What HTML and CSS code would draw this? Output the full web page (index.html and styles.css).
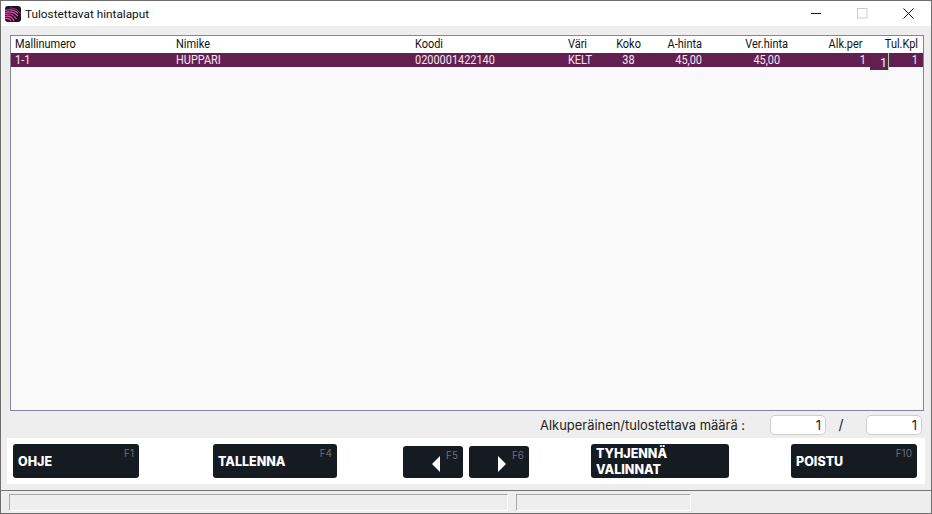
FILE: index.html
```html
<!DOCTYPE html>
<html lang="fi">
<head>
<meta charset="utf-8">
<title>Tulostettavat hintalaput</title>
<link rel="stylesheet" href="styles.css">
</head>
<body>
<div class="window">
  <header class="titlebar">
    <svg class="appicon" width="16" height="16" viewBox="0 0 16 16">
      <rect width="16" height="16" rx="3" fill="#1b1720"/>
      <path d="M0 4.5 C5 3 9 3.5 13 7M0 6.5 C5 5 9 6 13 10M0 8.5 C5 7 8 8 11.5 13M0 10.5 C4 9.5 7 10.5 9 15M0 12.5 C3 12 5 13 6 15" fill="none" stroke="#e64fb2" stroke-width="1.2"/>
      <path d="M5 2 C10 2 13 4 16 8" fill="none" stroke="#8a3f8c" stroke-width="1"/>
    </svg>
    <span class="title">Tulostettavat hintalaput</span>
    <div class="winctl">
      <span class="ctl"><svg width="11" height="11" viewBox="0 0 11 11"><path d="M0 5.5H10" stroke="#111" stroke-width="1"/></svg></span>
      <span class="ctl"><svg width="11" height="11" viewBox="0 0 11 11"><rect x=".5" y=".5" width="9.5" height="9.5" fill="none" stroke="#ccc"/></svg></span>
      <span class="ctl"><svg width="11" height="11" viewBox="0 0 11 11"><path d="M.5.5L10.5 10.5M10.5.5L.5 10.5" stroke="#111" stroke-width="1"/></svg></span>
    </div>
  </header>
  <main class="content">
    <section class="list">
      <div class="row head">
        <span class="l">Mallinumero</span><span class="l">Nimike</span><span class="l">Koodi</span><span class="l">Väri</span><span class="c">Koko</span><span class="r">A-hinta</span><span class="r">Ver.hinta</span><span class="r pr4">Alk.per</span><span class="r">Tul.Kpl</span>
      </div>
      <div class="row sel">
        <span class="l">1-1</span><span class="l">HUPPARI</span><span class="l">0200001422140</span><span class="l">KELT</span><span class="c">38</span><span class="r">45,00</span><span class="r pr8">45,00</span><span class="r">1</span><span class="r">1</span>
        <span class="editor">1</span>
      </div>
    </section>
    <div class="counts">
      <span class="countlabel">Alkuperäinen/tulostettava määrä :</span>
      <span class="field">1</span>
      <span class="slash">/</span>
      <span class="field">1</span>
    </div>
    <nav class="bar">
      <button class="btn w-ohje"><span class="key">F1</span>OHJE</button>
      <button class="btn w-tall"><span class="key">F4</span>TALLENNA</button>
      <div class="arrows">
        <button class="btn arrow"><span class="key">F5</span><svg width="8" height="16" viewBox="0 0 8 16"><path d="M8 0V16L0 8Z" fill="#fff"/></svg></button>
        <button class="btn arrow"><span class="key">F6</span><svg width="8" height="16" viewBox="0 0 8 16"><path d="M0 0V16L8 8Z" fill="#fff"/></svg></button>
      </div>
      <button class="btn w-tyh">TYHJENNÄ<br>VALINNAT</button>
      <button class="btn w-poi"><span class="key">F10</span>POISTU</button>
    </nav>
  </main>
  <footer class="status">
    <span class="pane p1"></span>
    <span class="pane p2"></span>
  </footer>
</div>
</body>
</html>
```
FILE: styles.css
```css
* { box-sizing: border-box; }
html, body { margin: 0; height: 514px; overflow: hidden; }
body { background: #eeeeee; font-family: "Open Sans", sans-serif; }
.window {
  width: 932px; height: 514px;
  border: 1px solid #6e6e6e;
  display: flex; flex-direction: column;
  background: #eeeeee;
}
.titlebar {
  height: 25px; background: #fff; flex: none;
  display: flex; align-items: center;
  padding-left: 4px;
}
.appicon { flex: none; margin-top: 1px; }
.title { margin-left: 4px; font: 11.8px Roboto, sans-serif; color: #111; }
.winctl { margin-left: auto; display: flex; }
.ctl { width: 46px; height: 25px; display: flex; align-items: center; justify-content: center; }
.content { flex: 1; display: flex; flex-direction: column; padding: 9px 6px 0 6px; }
.list {
  margin: 0 0 0 3px; width: 914px; height: 376px;
  background: #f9f9f9; border: 1px solid #85859a; flex: none;
}
.row {
  display: grid;
  grid-template-columns: 161px 239px 153px 44px 33px 57px 86px 78px 52px;
  padding-left: 4px;
  font: 12.5px/14px Roboto, sans-serif;
  position: relative;
}
.head { height: 17px; background: #fff; align-items: start; color: #111; padding-top: 1px; }
.sel { height: 14px; background: #641f51; color: #f4e8f0; align-items: start; }
.l { transform: scaleX(.875); transform-origin: left center; }
.c { text-align: center; transform: scaleX(.875); }
.r { text-align: right; transform: scaleX(.875); transform-origin: right center; }
.pr8 { padding-right: 9px; }
.pr4 { padding-right: 4px; }
.editor {
  position: absolute; left: 859px; top: 0; width: 19px; height: 17px;
  background: #641f51; color: #f4e8f0; text-align: right;
  padding: 3px 1px 0 0; border-right: 1px solid #9fd8b0;
}
.counts {
  flex: none; height: 27px; display: flex; align-items: center;
  font: 12.95px Inter, sans-serif; color: #222;
}
.countlabel { margin-left: 533px; width: 230px; white-space: nowrap; }
.field {
  width: 56px; height: 20px; background: #fff; border: 1px solid #cfcfcf; border-radius: 5px;
  text-align: right; padding: 0 4px; line-height: 18px; font-size: 13px;
}
.slash { width: 30px; text-align: center; font-size: 14px; }
.counts .field:last-child { margin-left: 10px; }
.bar {
  flex: none; height: 46px; background: #fff; width: 918px;
  display: flex; align-items: flex-start; padding: 6px 0 0 6px;
}
.btn {
  position: relative; height: 34px; background: #161a21; color: #fff; border: 0; border-radius: 3px;
  font: 800 12.5px/16px Inter, "Open Sans", sans-serif; text-align: left; padding: 2px 5px 0;
  display: block; margin: 0;
}
.key { position: absolute; right: 5px; top: 3px; font: 400 10px Inter, sans-serif; color: #6d6f74; }
.w-ohje { width: 126px; }
.w-tall { width: 124px; margin-left: 74px; }
.arrows { display: flex; gap: 6px; margin-left: 66px; margin-top: 2px; }
.arrow { width: 60px; height: 32px; display: flex; align-items: center; justify-content: center; padding: 4px 0 0 6px; }
.w-tyh { width: 138px; margin-left: 62px; padding-top: 1px; }
.w-poi { width: 126px; margin-left: 62px; }
.status {
  flex: none; height: 23px; margin-top: 6px; border-top: 1px solid #757575;
  display: flex; padding: 3px 0 0 8px; gap: 8px;
}
.pane { height: 17px; border: 1px solid #a8a8a8; border-right-color: #fff; border-bottom-color: #fff; }
.p1 { width: 499px; }
.p2 { width: 175px; }
```
